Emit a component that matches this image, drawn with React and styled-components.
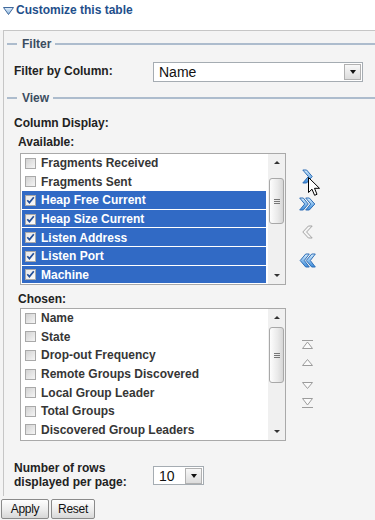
import React from "react";
import styled, { createGlobalStyle } from "styled-components";

const GlobalStyle = createGlobalStyle`
  body {
    margin: 0;
    background: #fff;
    font-family: "Liberation Sans", Arial, sans-serif;
    overflow: hidden;
  }
`;

const availableCols = [
  { label: "Fragments Received" },
  { label: "Fragments Sent" },
  { label: "Heap Free Current", selected: true },
  { label: "Heap Size Current", selected: true },
  { label: "Listen Address", selected: true },
  { label: "Listen Port", selected: true },
  { label: "Machine", selected: true },
];

const chosenCols = [
  "Name",
  "State",
  "Drop-out Frequency",
  "Remote Groups Discovered",
  "Local Group Leader",
  "Total Groups",
  "Discovered Group Leaders",
];

// blue chevrons for moving columns between the lists
const ChevronRight = () => (
  <svg width="11" height="15" viewBox="0 0 11 15">
    <defs>
      <linearGradient id="chevR" x1="0" y1="0" x2="0" y2="1">
        <stop offset="0" stopColor="#d6eefe" />
        <stop offset="1" stopColor="#3a8bdb" />
      </linearGradient>
    </defs>
    <path d="M0.8 1 H4.6 L10.2 7.5 L4.6 14 H0.8 L6.4 7.5 Z" fill="url(#chevR)" stroke="#2f6db5" />
  </svg>
);

const DoubleRight = () => (
  <svg width="17" height="14" viewBox="0 0 17 14">
    <defs>
      <linearGradient id="dblR" x1="0" y1="0" x2="0" y2="1">
        <stop offset="0" stopColor="#d6eefe" />
        <stop offset="1" stopColor="#3a8bdb" />
      </linearGradient>
    </defs>
    <path d="M0.7 1 H4.3 L9.3 7 L4.3 13 H0.7 L5.7 7 Z" fill="url(#dblR)" stroke="#2f6db5" />
    <path d="M6.7 1 H10.3 L15.8 7 L10.3 13 H6.7 L11.7 7 Z" fill="url(#dblR)" stroke="#2f6db5" />
  </svg>
);

const ChevronLeftGray = () => (
  <svg width="11" height="14" viewBox="0 0 11 14">
    <path d="M10.2 1 H6.4 L0.8 7 L6.4 13 H10.2 L4.6 7 Z" fill="#f4f4f4" stroke="#a3a3a3" />
  </svg>
);

const DoubleLeft = () => (
  <svg width="17" height="15" viewBox="0 0 17 15">
    <defs>
      <linearGradient id="dblL" x1="0" y1="0" x2="0" y2="1">
        <stop offset="0" stopColor="#d6eefe" />
        <stop offset="1" stopColor="#3a8bdb" />
      </linearGradient>
    </defs>
    <path d="M16.3 1 H12.7 L7.2 7.5 L12.7 14 H16.3 L11.3 7.5 Z" fill="url(#dblL)" stroke="#2f6db5" />
    <path d="M10.3 1 H6.7 L1.2 7.5 L6.7 14 H10.3 L5.3 7.5 Z" fill="url(#dblL)" stroke="#2f6db5" />
  </svg>
);

// grey order icons
const MoveTop = () => (
  <svg width="11" height="9" viewBox="0 0 11 9">
    <path d="M0 0.5 H11" stroke="#9c9c9c" />
    <path d="M5.5 2 L10.5 8.5 H0.5 Z" fill="#fafafa" stroke="#9c9c9c" />
  </svg>
);
const MoveUp = () => (
  <svg width="11" height="7" viewBox="0 0 11 7">
    <path d="M5.5 0.5 L10.5 6.5 H0.5 Z" fill="#fafafa" stroke="#9c9c9c" />
  </svg>
);
const MoveDown = () => (
  <svg width="11" height="7" viewBox="0 0 11 7">
    <path d="M0.5 0.5 H10.5 L5.5 6.5 Z" fill="#fafafa" stroke="#9c9c9c" />
  </svg>
);
const MoveBottom = () => (
  <svg width="11" height="10" viewBox="0 0 11 10">
    <path d="M0.5 0.5 H10.5 L5.5 7 Z" fill="#fafafa" stroke="#9c9c9c" />
    <path d="M0 9.5 H11" stroke="#9c9c9c" />
  </svg>
);

const Cursor = () => (
  <svg width="13" height="20" viewBox="0 0 13 20">
    <path d="M0.5 0.5 V15.5 L4 12.2 L6.6 18.3 L9 17.3 L6.5 11.3 H11.5 Z" fill="#fff" stroke="#000" />
  </svg>
);

const HeaderArrow = () => (
  <svg width="11" height="8" viewBox="0 0 11 8">
    <defs>
      <linearGradient id="hdr" x1="0" y1="0" x2="0" y2="1">
        <stop offset="0" stopColor="#e4f0fb" />
        <stop offset="1" stopColor="#8db6e0" />
      </linearGradient>
    </defs>
    <path d="M0.5 0.5 H10.5 L5.5 7.5 Z" fill="url(#hdr)" stroke="#40699c" />
  </svg>
);

const Check = () => (
  <svg width="9" height="9" viewBox="0 0 9 9">
    <path d="M1.3 4.3 L3.4 6.6 L7.8 1.2" fill="none" stroke="#24509a" strokeWidth="1.7" />
  </svg>
);

function Scroll({ offset, thumb }) {
  return (
    <ScrollBar>
      <ScrollBtn>
        <ScrollTri />
      </ScrollBtn>
      <ScrollTrack offset={offset}>
        <Thumb size={thumb}>
          <Grip />
          <Grip />
          <Grip />
        </Thumb>
      </ScrollTrack>
      <ScrollBtn>
        <ScrollTri down />
      </ScrollBtn>
    </ScrollBar>
  );
}

function App() {
  return (
    <Page>
      <GlobalStyle />
      <Header>
        <HeaderArrow />
        <HeaderTitle>Customize this table</HeaderTitle>
      </Header>
      <Body>
        <Panel>
          <Legend top={6}>Filter</Legend>
          <FieldRow top={11}>
            <Label>Filter by Column:</Label>
            <Select width={210} height={20}>
              <SelectText>Name</SelectText>
              <SelectBtn />
            </Select>
          </FieldRow>
          <Legend top={9}>View</Legend>
          <SectionLabel top={11} indent={10}>Column Display:</SectionLabel>
          <SectionLabel top={5} indent={14}>Available:</SectionLabel>
          <ListRow top={4}>
            <ListBox height={132}>
              <Items>
                {availableCols.map((c) => (
                  <Item key={c.label} selected={c.selected}>
                    <Box checked={c.selected}>{c.selected && <Check />}</Box>
                    {c.label}
                  </Item>
                ))}
              </Items>
              <Scroll offset={7} thumb={46} />
            </ListBox>
            <Tools pad={16}>
              <Tool h={15}>
                <ChevronRight />
              </Tool>
              <Tool h={14} gap={13}>
                <DoubleRight />
              </Tool>
              <Tool h={14} gap={14}>
                <ChevronLeftGray />
              </Tool>
              <Tool h={15} gap={14}>
                <DoubleLeft />
              </Tool>
              <Pointer>
                <Cursor />
              </Pointer>
            </Tools>
          </ListRow>
          <SectionLabel top={7} indent={14}>Chosen:</SectionLabel>
          <ListRow top={2}>
            <ListBox height={133}>
              <Items>
                {chosenCols.map((c) => (
                  <Item key={c}>
                    <Box />
                    {c}
                  </Item>
                ))}
              </Items>
              <Scroll offset={1} thumb={56} />
            </ListBox>
            <Tools pad={32}>
              <Tool h={9}>
                <MoveTop />
              </Tool>
              <Tool h={7} gap={10}>
                <MoveUp />
              </Tool>
              <Tool h={7} gap={16}>
                <MoveDown />
              </Tool>
              <Tool h={10} gap={9}>
                <MoveBottom />
              </Tool>
            </Tools>
          </ListRow>
          <FieldRow top={21}>
            <Label>
              Number of rows
              <br />
              displayed per page:
            </Label>
            <Select width={51} height={19}>
              <SelectText>10</SelectText>
              <SelectBtn />
            </Select>
          </FieldRow>
        </Panel>
        <Footer>
          <Button width={48}>Apply</Button>
          <Button width={44}>Reset</Button>
        </Footer>
      </Body>
    </Page>
  );
}

const Page = styled.div`
  width: 375px;
  height: 520px;
  overflow: hidden;
`;
const Header = styled.div`
  height: 30px;
  box-sizing: border-box;
  padding: 3px 0 0 3px;
  display: flex;
  align-items: flex-start;
  gap: 2px;
  & > svg {
    margin-top: 4px;
  }
`;
const HeaderTitle = styled.span`
  font-size: 12px;
  font-weight: bold;
  line-height: 15px;
  color: #1f4f8b;
`;
const Body = styled.div`
  background: #f4f4f4;
  height: 490px;
`;
const Panel = styled.div`
  margin-left: 3px;
  border-top: 1px solid #c6c6c6;
  border-left: 1px solid #c6c6c6;
  padding-bottom: 7px;
`;
const Legend = styled.div`
  display: flex;
  align-items: center;
  height: 14px;
  margin-top: ${(p) => p.top}px;
  font-size: 12px;
  font-weight: bold;
  color: #3b4c60;
  &::before {
    content: "";
    width: 10px;
    height: 2px;
    margin: 0 5px 0 3px;
    background: #adbccd;
  }
  &::after {
    content: "";
    flex: 1;
    height: 2px;
    margin-left: 4px;
    background: #adbccd;
  }
`;
const FieldRow = styled.div`
  display: flex;
  align-items: center;
  padding-left: 10px;
  margin-top: ${(p) => p.top}px;
`;
const Label = styled.div`
  width: 139px;
  font-size: 12px;
  font-weight: bold;
  line-height: 13.5px;
  color: #222;
`;
const Select = styled.div`
  width: ${(p) => p.width}px;
  height: ${(p) => p.height}px;
  box-sizing: border-box;
  border: 1px solid #a5acb2;
  background: #fff;
  display: flex;
  align-items: center;
`;
const SelectText = styled.span`
  flex: 1;
  padding-left: 5px;
  font-size: 14px;
  color: #111;
`;
const SelectBtn = styled.div`
  width: 17px;
  height: 16px;
  margin-right: 1px;
  box-sizing: border-box;
  border: 1px solid #b1b1b1;
  background: linear-gradient(#f8f8f8, #dcdcdc);
  display: flex;
  align-items: center;
  justify-content: center;
  &::after {
    content: "";
    border-left: 3.5px solid transparent;
    border-right: 3.5px solid transparent;
    border-top: 4px solid #111;
  }
`;
const SectionLabel = styled.div`
  margin-top: ${(p) => p.top}px;
  padding-left: ${(p) => p.indent}px;
  font-size: 12px;
  font-weight: bold;
  line-height: 14px;
  color: #222;
`;
const ListRow = styled.div`
  display: flex;
  align-items: flex-start;
  padding-left: 16px;
  margin-top: ${(p) => p.top}px;
`;
const ListBox = styled.div`
  width: 266px;
  height: ${(p) => p.height}px;
  box-sizing: border-box;
  border: 1px solid #a9a9a9;
  background: #fff;
  display: flex;
`;
const Items = styled.div`
  flex: 1;
  padding: 0 2px 0 1px;
  overflow: hidden;
`;
const Item = styled.div`
  height: 17.6px;
  margin-bottom: 1px;
  padding-top: 1px;
  box-sizing: border-box;
  display: flex;
  align-items: center;
  white-space: nowrap;
  font-size: 12px;
  font-weight: bold;
  background: ${(p) => (p.selected ? "#316ac5" : "transparent")};
  color: ${(p) => (p.selected ? "#fff" : "#363636")};
`;
const Box = styled.span`
  width: 11px;
  height: 11px;
  flex: none;
  box-sizing: border-box;
  margin: 0 5px 0 3px;
  border: 1px solid #a9a9a9;
  background: ${(p) =>
    p.checked ? "linear-gradient(135deg, #e8e8e8, #fbfbfb)" : "linear-gradient(135deg, #d2d2d2, #f5f5f5)"};
  display: flex;
  align-items: center;
  justify-content: center;
  & > svg {
    margin: -1px;
  }
`;
const ScrollBar = styled.div`
  width: 17px;
  flex: none;
  display: flex;
  flex-direction: column;
  background: #f0f0f0;
`;
const ScrollBtn = styled.div`
  height: 17px;
  display: flex;
  align-items: center;
  justify-content: center;
`;
const ScrollTri = styled.span`
  border-left: 3px solid transparent;
  border-right: 3px solid transparent;
  ${(p) => (p.down ? "border-top: 3px solid #333;" : "border-bottom: 3px solid #333;")}
`;
const ScrollTrack = styled.div`
  flex: 1;
  padding-top: ${(p) => p.offset}px;
`;
const Thumb = styled.div`
  height: ${(p) => p.size}px;
  margin: 0 1px;
  box-sizing: border-box;
  border: 1px solid #a8a8a8;
  border-radius: 3px;
  background: linear-gradient(90deg, #fdfdfd, #e9e9e9 60%, #d6d6d6);
  display: flex;
  flex-direction: column;
  align-items: center;
  justify-content: center;
  gap: 1px;
`;
const Grip = styled.span`
  width: 6px;
  height: 1px;
  background: #777;
`;
const Tools = styled.div`
  position: relative;
  width: 20px;
  margin-left: 11px;
  padding-top: ${(p) => p.pad}px;
  display: flex;
  flex-direction: column;
  align-items: center;
`;
const Tool = styled.div`
  height: ${(p) => p.h}px;
  margin-top: ${(p) => p.gap || 0}px;
  display: flex;
  align-items: center;
  cursor: pointer;
`;
const Pointer = styled.div`
  position: absolute;
  left: 11px;
  top: 24px;
`;
const Footer = styled.div`
  display: flex;
  gap: 2px;
  padding-left: 1px;
  margin-top: 3px;
`;
const Button = styled.div`
  width: ${(p) => p.width}px;
  height: 20px;
  box-sizing: border-box;
  border: 1px solid #8a8a8a;
  border-radius: 2px;
  background: linear-gradient(#fefefe, #ececec 55%, #d8d8d8);
  display: flex;
  align-items: center;
  justify-content: center;
  font-size: 12px;
  letter-spacing: -0.3px;
  color: #111;
`;

export default App;
